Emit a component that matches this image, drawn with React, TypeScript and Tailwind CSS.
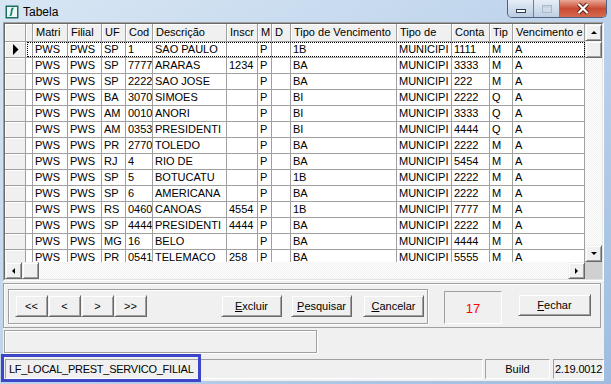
import React from "react";

type Col = { w: string; title: string };

const cols: Col[] = [
  { w: "w-[7px]", title: "" },
  { w: "w-[35px]", title: "Matri" },
  { w: "w-[34px]", title: "Filial" },
  { w: "w-[24px]", title: "UF" },
  { w: "w-[27px]", title: "Cod" },
  { w: "w-[74px]", title: "Descrição" },
  { w: "w-[31px]", title: "Inscr" },
  { w: "w-[14px]", title: "M" },
  { w: "w-[19px]", title: "D" },
  { w: "w-[106px]", title: "Tipo de Vencimento" },
  { w: "w-[55px]", title: "Tipo de" },
  { w: "w-[38px]", title: "Conta" },
  { w: "w-[23px]", title: "Tip" },
  { w: "w-[72px]", title: "Vencimento e" },
];

const rows: string[][] = [
  ["", "PWS", "PWS", "SP", "1", "SAO PAULO", "", "P", "", "1B", "MUNICIPI", "1111", "M", "A"],
  ["", "PWS", "PWS", "SP", "7777", "ARARAS", "1234", "P", "", "BA", "MUNICIPI", "3333", "M", "A"],
  ["", "PWS", "PWS", "SP", "2222", "SAO JOSE", "", "P", "", "BA", "MUNICIPI", "222", "M", "A"],
  ["", "PWS", "PWS", "BA", "3070", "SIMOES", "", "P", "", "BI", "MUNICIPI", "2222", "Q", "A"],
  ["", "PWS", "PWS", "AM", "0010", "ANORI", "", "P", "", "BI", "MUNICIPI", "3333", "Q", "A"],
  ["", "PWS", "PWS", "AM", "0353", "PRESIDENTI", "", "P", "", "BI", "MUNICIPI", "4444", "Q", "A"],
  ["", "PWS", "PWS", "PR", "2770", "TOLEDO", "", "P", "", "BA", "MUNICIPI", "2222", "M", "A"],
  ["", "PWS", "PWS", "RJ", "4", "RIO DE", "", "P", "", "BA", "MUNICIPI", "5454", "M", "A"],
  ["", "PWS", "PWS", "SP", "5", "BOTUCATU", "", "P", "", "1B", "MUNICIPI", "2222", "M", "A"],
  ["", "PWS", "PWS", "SP", "6", "AMERICANA", "", "P", "", "BA", "MUNICIPI", "2222", "M", "A"],
  ["", "PWS", "PWS", "RS", "0460", "CANOAS", "4554", "P", "", "1B", "MUNICIPI", "7777", "M", "A"],
  ["", "PWS", "PWS", "SP", "4444", "PRESIDENTI", "4444", "P", "", "BA", "MUNICIPI", "2222", "M", "A"],
  ["", "PWS", "PWS", "MG", "16", "BELO", "", "P", "", "BA", "MUNICIPI", "4444", "M", "A"],
  ["", "PWS", "PWS", "PR", "0541", "TELEMACO", "258", "P", "", "BA", "MUNICIPI", "5555", "M", "A"],
];

const btn3d =
  "bg-[#f0f0f0] border border-t-[#f0f0f0] border-l-[#f0f0f0] border-b-[#696969] border-r-[#696969] shadow-[inset_1px_1px_0_#fff,inset_-1px_-1px_0_#a0a0a0]";

const Arrow = ({ dir }: { dir: "up" | "down" | "left" | "right" }) => {
  const pts = {
    up: "1,5 4,2 7,5",
    down: "1,2 4,5 7,2",
    left: "5,1 2,4 5,7",
    right: "2,1 5,4 2,7",
  }[dir];
  return (
    <svg width="8" height="8" viewBox="0 0 8 8">
      <polygon points={pts} fill="#000" />
    </svg>
  );
};

const ScrollBtn = ({ dir }: { dir: "up" | "down" | "left" | "right" }) => (
  <div className={`${btn3d} w-[17px] h-[17px] shrink-0 flex items-center justify-center`}>
    <Arrow dir={dir} />
  </div>
);

const track =
  "bg-[repeating-conic-gradient(#f0f0f0_0_25%,#ffffff_0_50%)] bg-[length:2px_2px]";

const Grid = () => (
  <div className="border border-t-[#a0a0a0] border-l-[#a0a0a0] border-r-white border-b-white">
    <div className="border border-t-[#696969] border-l-[#696969] border-r-[#e3e3e3] border-b-[#e3e3e3]">
      <div className="flex h-[238px]">
        <div className="w-[580px] overflow-hidden">
          {/* header */}
          <div className="flex h-[18px] leading-[17px]">
            <div className="w-[21px] shrink-0 bg-[#f0f0f0] border-r border-b border-[#a0a0a0] shadow-[inset_1px_1px_0_#fff]" />
            {cols.map((c, i) => (
              <div
                key={i}
                className={`${c.w} shrink-0 bg-[#f0f0f0] border-r border-b border-[#a0a0a0] shadow-[inset_1px_1px_0_#fff] overflow-hidden whitespace-nowrap pl-[3px]`}
              >
                {c.title}
              </div>
            ))}
          </div>
          {/* rows */}
          <div className="h-[220px] overflow-hidden">
            {rows.map((r, ri) => (
              <div key={ri} className="relative flex h-[16px] leading-[15px]">
                <div className="w-[21px] shrink-0 bg-[#f0f0f0] border-r border-b border-[#a0a0a0] shadow-[inset_1px_1px_0_#fff] flex items-center justify-center">
                  {ri === 0 && (
                    <svg width="7" height="11" viewBox="0 0 7 11">
                      <polygon points="1,0 6.5,5.5 1,11" fill="#000" />
                    </svg>
                  )}
                </div>
                {cols.map((c, ci) => (
                  <div
                    key={ci}
                    className={`${c.w} shrink-0 bg-white border-r border-b border-[#a0a0a0] overflow-hidden whitespace-nowrap pl-[2px]`}
                  >
                    {r[ci]}
                  </div>
                ))}
                {ri === 0 && (
                  <div className="absolute left-[22px] top-0 right-0 h-[15px] border border-dotted border-black" />
                )}
              </div>
            ))}
          </div>
        </div>
        <div className="w-[17px] flex flex-col">
          <ScrollBtn dir="up" />
          <div className={`${btn3d} h-[17px]`} />
          <div className={`flex-1 ${track}`} />
          <ScrollBtn dir="down" />
        </div>
      </div>
      <div className="flex h-[17px]">
        <div className="w-[580px] flex">
          <ScrollBtn dir="left" />
          <div className={`${btn3d} w-[17px]`} />
          <div className={`flex-1 ${track}`} />
          <ScrollBtn dir="right" />
        </div>
        <div className="w-[17px] bg-[#d0d0d0]" />
      </div>
    </div>
  </div>
);

const Button = ({ className, children }: { className: string; children: React.ReactNode }) => (
  <div className={`${btn3d} ${className} h-[22px] flex items-center justify-center`}>{children}</div>
);

const sunken = "border border-t-[#a0a0a0] border-l-[#a0a0a0] border-r-white border-b-white";

export default function App() {
  return (
    <div className="relative w-[611px] h-[384px] overflow-hidden bg-gradient-to-br from-[#d8e6f4] via-[#bdd3eb] to-[#9fbce0] text-[11px] text-black font-['Liberation_Sans',Arial,sans-serif]">
      {/* title bar */}
      <div className="flex h-[22px]">
        <div className="flex items-center pl-[5px] pt-[1px]">
          <svg width="14" height="14" viewBox="0 0 14 14">
            <rect x="0.5" y="0.5" width="13" height="13" fill="#1d6e63" />
            <rect x="2" y="2" width="10" height="10" fill="#eef7f4" />
            <path d="M8.5 3.5 Q7 3.3 6.8 5 L6.2 9 Q6 10.6 4.6 10.4" stroke="#138a78" strokeWidth="1.8" fill="none" />
          </svg>
          <span className="ml-[4px] text-[12px]">Tabela</span>
        </div>
        <div className="ml-auto mr-[4px] flex h-[18px] rounded-b-[5px] border border-t-0 border-[#4d6282] overflow-hidden">
          <div className="w-[26px] bg-gradient-to-b from-[#e6eef7] to-[#b9cbe1] border-r border-[#6b7f9c] flex items-end justify-center pb-[4px]">
            <div className="w-[10px] h-[4px] bg-white border border-[#2f3d52]" />
          </div>
          <div className="w-[26px] bg-gradient-to-b from-[#e6eef7] to-[#bfcfe2] border-r border-[#6b7f9c] flex items-center justify-center">
            <div className="w-[10px] h-[8px] border border-[#a9b9cf] shadow-[inset_0_2px_0_#c6d3e3]" />
          </div>
          <div className="w-[46px] bg-gradient-to-b from-[#e9a795] via-[#c84a33] to-[#d66a4e] flex items-center justify-center">
            <svg width="16" height="13" viewBox="0 0 16 13">
              <path d="M3.5 2 L12.5 11 M12.5 2 L3.5 11" stroke="#5a1d12" strokeWidth="4" />
              <path d="M3.5 2 L12.5 11 M12.5 2 L3.5 11" stroke="#fff" strokeWidth="2.2" />
            </svg>
          </div>
        </div>
      </div>

      <div className="flex h-[359px]">
        <div className="w-[3px]" />
        <div className="w-[601px] bg-[#f0f0f0] flex flex-col">
          <Grid />

          {/* button panel */}
          <div className="mt-[2px] w-[598px] h-[45px] border border-[#a0a0a0] shadow-[inset_1px_1px_0_#fff] flex items-start pl-[4px]">
            <div className="mt-[5px] w-[420px] h-[35px] border border-[#a0a0a0] shadow-[inset_1px_1px_0_#fff,1px_1px_0_#fff] flex items-start pl-[6px] pt-[5px]">
              <Button className="w-[33px]">&lt;&lt;</Button>
              <Button className="w-[33px]">&lt;</Button>
              <Button className="w-[33px]">&gt;</Button>
              <Button className="w-[33px]">&gt;&gt;</Button>
              <Button className="w-[61px] ml-[74px]">
                <span className="underline">E</span>xcluir
              </Button>
              <Button className="w-[61px] ml-[9px]">
                <span className="underline">P</span>esquisar
              </Button>
              <Button className="w-[61px] ml-[11px]">
                <span className="underline">C</span>ancelar
              </Button>
            </div>
            <div className={`mt-[7px] ml-[16px] w-[58px] h-[33px] ${sunken} flex items-center justify-center pt-[2px] text-[13px] text-[#ff0000]`}>
              17
            </div>
            <Button className="mt-[10px] ml-[16px] w-[73px]">
              <span className="underline">F</span>echar
            </Button>
          </div>

          {/* empty panel */}
          <div className="mt-[2px] ml-[1px] w-[313px] h-[23px] border border-[#a0a0a0] shadow-[inset_1px_1px_0_#fff,1px_1px_0_#fff]" />

          {/* status bar */}
          <div className="mt-[6px] h-[20px] flex leading-[18px]">
            <div className={`ml-[2px] w-[478px] ${sunken} pl-[3px] whitespace-nowrap tracking-[-0.25px]`}>LF_LOCAL_PREST_SERVICO_FILIAL</div>
            <div className={`ml-[2px] w-[65px] ${sunken} text-center`}>Build</div>
            <div className={`ml-[3px] w-[51px] ${sunken} text-center whitespace-nowrap overflow-hidden tracking-[-0.2px]`}>2.19.0012</div>
          </div>
        </div>
        <div className="w-[7px]" />
      </div>

      {/* annotation box */}
      <div className="absolute left-[1px] top-[354px] w-[200px] h-[28px] border-[3px] border-[#3d45c9]" />
    </div>
  );
}
